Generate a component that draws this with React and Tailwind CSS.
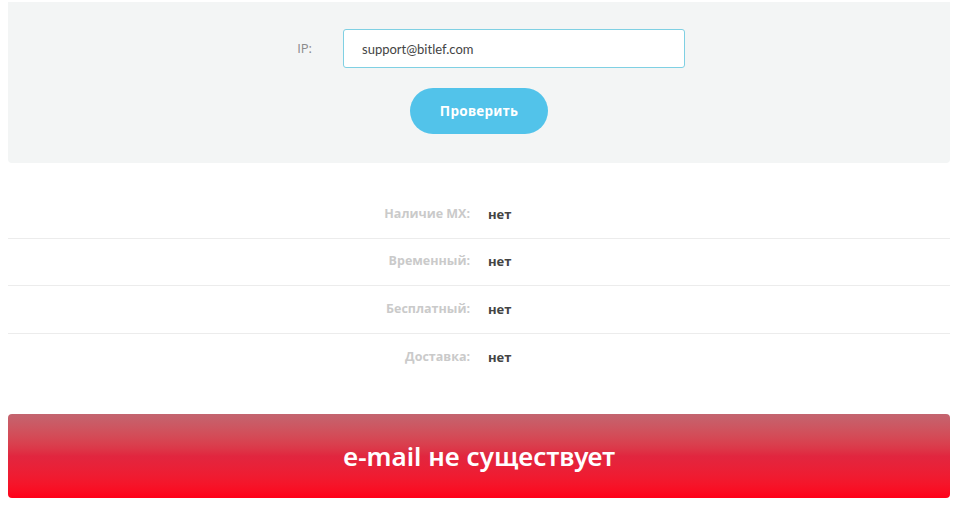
import React from "react";

const rows = [
  ["Наличие MX:", "нет"],
  ["Временный:", "нет"],
  ["Бесплатный:", "нет"],
  ["Доставка:", "нет"],
];

export default function App() {
  return (
    <div className="bg-white w-[960px] h-[507px] overflow-hidden" style={{ fontFamily: '"Open Sans", "Noto Sans", sans-serif' }}>
      <div className="ml-2 mr-[10px] pt-[2px]">
        <div className="bg-[#f3f5f5] rounded-b-[4px] h-[161px] pt-[27px]">
          <div className="flex items-center">
            <div className="w-[304px] text-right text-[13px] text-[#8a8a8a]">IP:</div>
            <input
              readOnly
              value="support@bitlef.com"
              className="ml-[31px] w-[342px] h-[39px] bg-white border border-[#7fd0e3] rounded-[3px] px-[18px] text-[13px] text-[#444] outline-none"
              style={{ fontFamily: 'Lato, sans-serif' }}
            />
          </div>
          <div className="flex justify-center mt-[20px]">
            <button className="w-[138px] h-[46px] rounded-full bg-[#52c3ea] text-white text-[13.5px] font-bold tracking-[0.3px]" style={{ fontFamily: '"Noto Sans", sans-serif' }}>
              Проверить
            </button>
          </div>
        </div>

        <div className="mt-[28px]">
          {rows.map(([k, v], i) => (
            <div
              key={k}
              className={"flex items-center h-[47.5px] " + (i < rows.length - 1 ? "border-b border-[#ececec]" : "")}
            >
              <div className="w-[462px] text-right text-[12.5px] font-bold text-[#cacaca]">{k}</div>
              <div className="pl-[18px] text-[13px] font-bold text-[#444]">{v}</div>
            </div>
          ))}
        </div>

        <div className="mt-[33px] h-[84px] rounded-[4px] bg-gradient-to-b from-[#c3646f] via-[#e1263f] to-[#ff0018] flex items-center justify-center">
          <span className="text-white text-[26px] font-semibold" style={{ fontFamily: '"Noto Sans", sans-serif' }}>
            e-mail не существует
          </span>
        </div>
      </div>
    </div>
  );
}
